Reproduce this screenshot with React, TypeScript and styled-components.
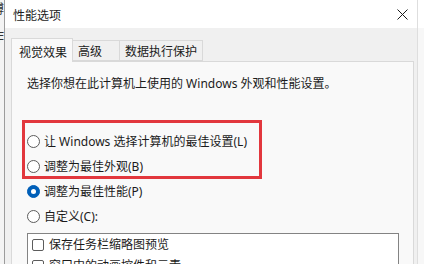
import * as React from "react";
import styled, { createGlobalStyle } from "styled-components";

const GlobalStyle = createGlobalStyle`
  html, body {
    margin: 0;
    padding: 0;
    background: #f3f3f3;
  }
  body {
    font-family: "Noto Sans", "Noto Sans CJK SC", sans-serif;
    font-size: 12px;
    color: #1b1b1b;
  }
`;

const Screen = styled.div`
  display: flex;
  width: 424px;
  height: 264px;
  overflow: hidden;
`;

const BackWindow = styled.div`
  flex: 0 0 4px;
  display: flex;
  flex-direction: column;
  overflow: hidden;
  background: #f4f4f4;
  font-family: "Noto Sans CJK SC", sans-serif;
  font-size: 13px;
  line-height: 16px;
  color: #333;
`;

const BackGlyph = styled.span<{ $top: number }>`
  margin-top: ${p => p.$top}px;
  margin-left: -9px;
  white-space: nowrap;
`;

const Dialog = styled.div`
  flex: 0 0 414px;
  display: flex;
  flex-direction: column;
  border-left: 1px solid #9c9c9c;
  border-right: 1px solid #dedede;
  box-sizing: border-box;
`;

const RightEdge = styled.div`
  flex: 1;
  background: linear-gradient(#ffffff 0 28px, #f7f7f7 28px);
`;

const TitleBar = styled.div`
  height: 28px;
  flex: 0 0 28px;
  display: flex;
  align-items: center;
  justify-content: space-between;
  padding: 0 5px 0 8px;
  background: #ffffff;
  font-family: "Noto Sans CJK SC", sans-serif;
  font-size: 12px;
`;

const CloseButton = styled.div`
  width: 20px;
  height: 20px;
  display: flex;
  align-items: center;
  justify-content: center;
  color: #1b1b1b;
`;

const Body = styled.div`
  flex: 1;
  display: flex;
  flex-direction: column;
  background: #f0f0f0;
  padding: 10px 3px 0 6px;
  min-height: 0;
`;

const TabRow = styled.div`
  display: flex;
  align-items: flex-end;
  height: 23px;
  flex: 0 0 23px;
`;

const Tab = styled.div<{ $active?: boolean; $width: number }>`
  box-sizing: border-box;
  width: ${p => p.$width}px;
  height: ${p => (p.$active ? 24 : 21)}px;
  margin-bottom: ${p => (p.$active ? -1 : 0)}px;
  padding: ${p => (p.$active ? "2px 0 0 7px" : "0 0 0 5px")};
  display: flex;
  align-items: center;
  position: relative;
  z-index: ${p => (p.$active ? 2 : 1)};
  background: ${p => (p.$active ? "#f9f9f9" : "#f0f0f0")};
  border: 1px solid #d9d9d9;
  border-bottom: ${p => (p.$active ? "none" : "1px solid #d9d9d9")};
  margin-right: -1px;
  font-family: "Noto Sans CJK SC", sans-serif;
  font-size: 12px;
  line-height: 16px;
  color: #1b1b1b;
`;

const Panel = styled.div`
  flex: 1;
  display: flex;
  flex-direction: column;
  min-height: 0;
  background: #f9f9f9;
  border: 1px solid #d9d9d9;
  border-bottom: none;
  padding: 14px 14px 0 15px;
`;

const Description = styled.div`
  height: 16px;
  line-height: 16px;
  white-space: nowrap;
`;

const RadioGroup = styled.div`
  position: relative;
  display: flex;
  flex-direction: column;
  margin-top: 37px;
`;

const RadioRow = styled.label`
  display: flex;
  align-items: center;
  gap: 4px;
  height: 25px;
  line-height: 16px;
  white-space: nowrap;
`;

const RadioDot = styled.span<{ $checked?: boolean }>`
  box-sizing: border-box;
  width: 13px;
  height: 13px;
  flex: 0 0 13px;
  border-radius: 50%;
  display: flex;
  align-items: center;
  justify-content: center;
  background: ${p => (p.$checked ? "#005fb8" : "#ffffff")};
  border: 1px solid ${p => (p.$checked ? "#005fb8" : "#5c5c5c")};

  &::after {
    content: "";
    display: ${p => (p.$checked ? "block" : "none")};
    width: 5px;
    height: 5px;
    border-radius: 50%;
    background: #ffffff;
  }
`;

const Highlight = styled.div`
  position: absolute;
  top: -9px;
  left: -5px;
  width: 240px;
  height: 59px;
  box-sizing: border-box;
  border: 3px solid #e2373d;
  pointer-events: none;
`;

const ListBox = styled.div`
  flex: 1;
  margin-top: 4px;
  background: #ffffff;
  border: 1px solid #838383;
  border-bottom: none;
  padding: 0 4px;
  overflow: hidden;
`;

const CheckRow = styled.div`
  display: flex;
  align-items: center;
  gap: 5px;
  height: 21px;
  white-space: nowrap;
  line-height: 16px;
`;

const CheckBox = styled.span`
  box-sizing: border-box;
  width: 12px;
  height: 12px;
  flex: 0 0 12px;
  border: 1px solid #5c5c5c;
  border-radius: 2px;
  background: #ffffff;
`;

const radios = [
  { label: "让 Windows 选择计算机的最佳设置(L)" },
  { label: "调整为最佳外观(B)" },
  { label: "调整为最佳性能(P)", checked: true },
  { label: "自定义(C):" },
];

const effects = ["保存任务栏缩略图预览", "窗口中的动画控件和元素"];

export default function App() {
  return (
    <Screen>
      <GlobalStyle />
      <BackWindow>
        <BackGlyph $top={0}>博</BackGlyph>
        <BackGlyph $top={12}>作</BackGlyph>
        <BackGlyph $top={106}>]</BackGlyph>
      </BackWindow>
      <Dialog>
        <TitleBar>
          <span>性能选项</span>
          <CloseButton>
            <svg width="11" height="11" viewBox="0 0 11 11">
              <path d="M0.5 0.5 L10.5 10.5 M10.5 0.5 L0.5 10.5" stroke="#1b1b1b" strokeWidth="1" />
            </svg>
          </CloseButton>
        </TitleBar>
        <Body>
          <TabRow>
            <Tab $active $width={62}>视觉效果</Tab>
            <Tab $width={48}>高级</Tab>
            <Tab $width={84}>数据执行保护</Tab>
          </TabRow>
          <Panel>
            <Description>选择你想在此计算机上使用的 Windows 外观和性能设置。</Description>
            <RadioGroup>
              {radios.map(r => (
                <RadioRow key={r.label}>
                  <RadioDot $checked={r.checked} />
                  <span>{r.label}</span>
                </RadioRow>
              ))}
              <Highlight />
            </RadioGroup>
            <ListBox>
              {effects.map(e => (
                <CheckRow key={e}>
                  <CheckBox />
                  <span>{e}</span>
                </CheckRow>
              ))}
            </ListBox>
          </Panel>
        </Body>
      </Dialog>
      <RightEdge />
    </Screen>
  );
}
